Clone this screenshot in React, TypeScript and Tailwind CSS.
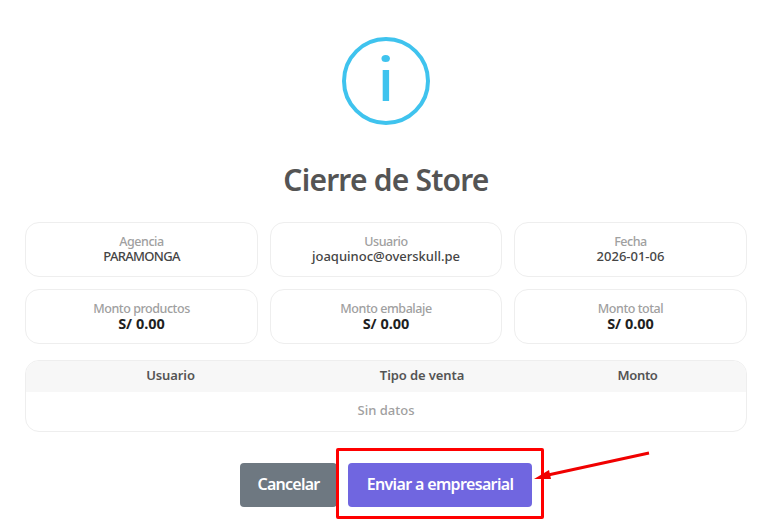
const font = { fontFamily: '"Noto Sans", sans-serif' };

function Card({ label, value, strong, narrow }: { label: string; value: string; strong?: boolean; narrow?: boolean }) {
  return (
    <div className="flex h-[55px] flex-col items-center justify-center rounded-[14px] border border-[#eeeeee] bg-white pb-[2px]">
      <span className="text-[12.5px] leading-[15px] font-medium tracking-[-0.45px] text-[#a0a0a0]">{label}</span>
      <span className={strong ? "text-[14.5px] leading-[15px] font-bold text-[#1f1f1f]" : narrow ? "text-[13px] leading-[15px] font-medium tracking-[-0.7px] text-[#454545]" : "text-[13px] leading-[15px] font-medium text-[#454545]"}>{value}</span>
    </div>
  );
}

export default function App() {
  return (
    <div style={font} className="relative h-[527px] w-[772px] overflow-hidden bg-white">
      <div className="flex flex-col items-center pt-[37px]">
        <svg width="88" height="88" viewBox="0 0 88 88" fill="none">
          <circle cx="44" cy="44" r="42" stroke="#3fc3ee" strokeWidth="4" />
          <ellipse cx="43.7" cy="21.5" rx="4.2" ry="3.5" fill="#3fc3ee" />
          <rect x="40.7" y="33" width="6.4" height="31" fill="#3fc3ee" />
        </svg>
        <h2 className="mt-[31px] text-[30px] leading-[47px] font-semibold tracking-[-0.8px] text-[#545454]">Cierre de Store</h2>
      </div>
      <div className="mt-[19px] grid grid-cols-[233px_232px_233px] gap-x-3 gap-y-3 pl-[25px]">
        <Card label="Agencia" value="PARAMONGA" narrow />
        <Card label="Usuario" value="joaquinoc@overskull.pe" />
        <Card label="Fecha" value="2026-01-06" />
        <Card label="Monto productos" value="S/ 0.00" strong />
        <Card label="Monto embalaje" value="S/ 0.00" strong />
        <Card label="Monto total" value="S/ 0.00" strong />
      </div>
      <div className="mx-[25px] mt-4 h-[72px] overflow-hidden rounded-[14px] border border-[#eeeeee]">
        <div className="grid h-[31px] grid-cols-[289px_214px_217px] items-center bg-[#f7f7f7] pb-[2px] text-center text-[13px] font-semibold tracking-[-0.1px] text-[#545454]">
          <span>Usuario</span>
          <span>Tipo de venta</span>
          <span className="tracking-[-0.3px]">Monto</span>
        </div>
        <div className="flex h-[39px] items-center justify-center pb-[2px] text-[13px] font-medium text-[#a0a0a0]">Sin datos</div>
      </div>
      <div className="mt-[31px] flex justify-center gap-[11px]">
        <button className="h-[44px] w-[97px] rounded-[4px] bg-[#6e7881] pb-[2px] text-[16px] font-semibold tracking-[-0.75px] text-white">Cancelar</button>
        <button className="h-[44px] w-[184px] rounded-[4px] bg-[#7066e0] pb-[2px] text-[16px] font-semibold tracking-[-0.65px] text-white">Enviar a empresarial</button>
      </div>
      <div className="absolute top-[448px] left-[336px] h-[71px] w-[208px] rounded-[2px] border-[3px] border-[#ff0000]" />
      <svg className="absolute top-0 left-0" width="772" height="527" viewBox="0 0 772 527" fill="none">
        <line x1="649" y1="453" x2="548" y2="475" stroke="#f00000" strokeWidth="3" />
        <polygon points="534,479 549,470 551,479" fill="#f00000" />
      </svg>
    </div>
  );
}
